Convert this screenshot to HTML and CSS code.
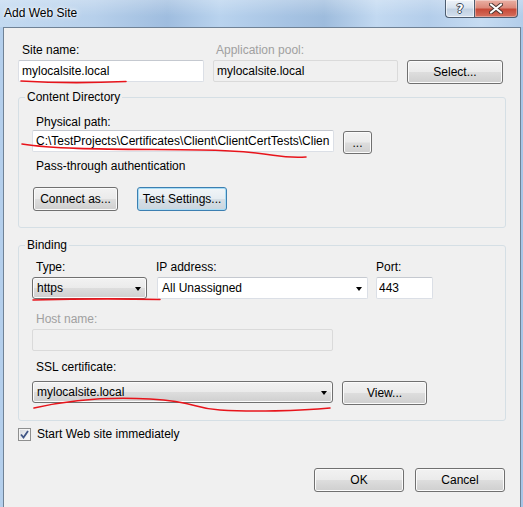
FILE: index.html
```html
<!DOCTYPE html>
<html lang="en">
<head>
    <meta charset="UTF-8">
    <title>Add Web Site</title>
    <link rel="stylesheet" href="styles.css">
</head>
<body>
    <div class="window">
        <!-- Title bar -->
        <div class="titlebar">
            <span class="title">Add Web Site</span>
            <div class="caption-btns">
                <span class="cap-help">?</span>
                <span class="cap-close">
                    <svg width="14" height="11" viewBox="0 0 14 11">
                        <path d="M2 1.5 L12 9.5 M12 1.5 L2 9.5" stroke="#4a3530" stroke-width="4" stroke-linecap="round"/>
                        <path d="M2 1.5 L12 9.5 M12 1.5 L2 9.5" stroke="#fff" stroke-width="2.2" stroke-linecap="round"/>
                    </svg>
                </span>
            </div>
        </div>

        <!-- Dialog body -->
        <div class="client">
            <div class="top-row">
                <div class="field site-field">
                    <label class="lbl">Site name:</label>
                    <input class="textbox" type="text" value="mylocalsite.local">
                </div>
                <div class="field pool-field">
                    <label class="lbl disabled">Application pool:</label>
                    <input class="textbox readonly" type="text" value="mylocalsite.local" readonly>
                </div>
                <button class="btn select-btn">Select...</button>
            </div>

            <fieldset class="group content-group">
                <legend>Content Directory</legend>
                <label class="lbl path-lbl">Physical path:</label>
                <div class="path-row">
                    <input class="textbox path-box" type="text" value="C:\TestProjects\Certificates\Client\ClientCertTests\Clien">
                    <button class="btn browse-btn">...</button>
                </div>
                <div class="auth-text">Pass-through authentication</div>
                <div class="auth-btns">
                    <button class="btn connect-btn">Connect as...</button>
                    <button class="btn focused test-btn">Test Settings...</button>
                </div>
            </fieldset>

            <fieldset class="group binding-group">
                <legend>Binding</legend>
                <div class="binding-row">
                    <div class="field type-field">
                        <label class="lbl">Type:</label>
                        <div class="combo combo-btn">https<span class="arrow"></span></div>
                    </div>
                    <div class="field ip-field">
                        <label class="lbl">IP address:</label>
                        <div class="combo combo-edit">All Unassigned<span class="arrow"></span></div>
                    </div>
                    <div class="field port-field">
                        <label class="lbl">Port:</label>
                        <input class="textbox port-box" type="text" value="443">
                    </div>
                </div>
                <div class="field host-field">
                    <label class="lbl disabled">Host name:</label>
                    <input class="textbox readonly host-box" type="text" value="" disabled>
                </div>
                <div class="field ssl-field">
                    <label class="lbl">SSL certificate:</label>
                    <div class="ssl-row">
                        <div class="combo combo-btn ssl-combo">mylocalsite.local<span class="arrow"></span></div>
                        <button class="btn view-btn">View...</button>
                    </div>
                </div>
            </fieldset>

            <div class="check-row">
                <span class="checkbox">
                    <svg width="9" height="9" viewBox="0 0 9 9">
                        <path d="M1 4.5 L3.5 7.5 L8 1" fill="none" stroke="#3f5585" stroke-width="1.8"/>
                    </svg>
                </span>
                <span>Start Web site immediately</span>
            </div>

            <div class="footer">
                <button class="btn ok-btn">OK</button>
                <button class="btn cancel-btn">Cancel</button>
            </div>
        </div>

        <!-- red pen marks drawn over the form -->
        <svg class="ink" width="523" height="507" viewBox="0 0 523 507">
            <g fill="none" stroke="#e8141b" stroke-width="1.6" stroke-linecap="round">
                <path d="M21 81 Q 70 84 126 81.5"/>
                <path d="M22 144 C 60 150, 120 149, 200 150 S 270 159, 306 157"/>
                <path d="M33 300 Q 100 298 160 299.5"/>
                <path d="M34 408 C 60 402, 100 396, 150 399 S 190 408, 220 410 S 300 411, 330 408"/>
            </g>
        </svg>
    </div>
</body>
</html>
```

FILE: styles.css
```css
* {
    margin: 0;
    padding: 0;
    box-sizing: border-box;
}

body {
    font-family: "Liberation Sans", Arial, sans-serif;
    font-size: 12px;
    line-height: 14px;
    color: #000;
    background: #fff;
}

/* Window frame */
.window {
    position: relative;
    width: 523px;
    height: 507px;
    overflow: hidden;
    display: flex;
    flex-direction: column;
    background: linear-gradient(90deg, #b4cfec 0%, #a8c5e6 100%);
}

/* Glass title bar */
.titlebar {
    height: 27px;
    display: flex;
    align-items: flex-start;
    background:
        linear-gradient(180deg, rgba(255, 255, 255, 0.25) 0%, rgba(255, 255, 255, 0) 60%),
        linear-gradient(90deg, #c3daf1 0%, #b7d0eb 18%, #9fbddf 32%, #b9d3ee 42%, #a6c3e3 55%, #9ebcdd 62%, #c2d9f1 72%, #b3cdea 82%, #c6dcf2 92%, #b2cdea 100%);
}

.title {
    padding: 6px 0 0 4px;
    text-shadow: 0 0 6px #fff, 0 0 3px #fff;
}

.caption-btns {
    margin-left: auto;
    margin-right: 5px;
    display: flex;
}

.cap-help,
.cap-close {
    height: 18px;
    display: flex;
    align-items: center;
    justify-content: center;
    border: 1px solid #4d5d70;
    border-top: none;
}

.cap-help {
    width: 29px;
    border-right: none;
    border-bottom-left-radius: 4px;
    background: linear-gradient(180deg, #eef3f9 0%, #d9e3ee 45%, #c2d1e2 55%, #d3e0ee 100%);
    box-shadow: inset 0 0 0 1px rgba(255, 255, 255, 0.6);
    color: #fff;
    font-family: "DejaVu Sans", sans-serif;
    font-weight: bold;
    font-size: 12px;
    text-shadow: 1px 0 0 #3b4656, -1px 0 0 #3b4656, 0 1px 0 #3b4656, 0 -1px 0 #3b4656;
}

.cap-close {
    width: 44px;
    border-bottom-right-radius: 4px;
    background: linear-gradient(180deg, #eab0a4 0%, #dc8a7b 45%, #c74a38 55%, #d5705e 100%);
    box-shadow: inset 0 0 0 1px rgba(255, 255, 255, 0.35);
}

/* Client area of the dialog */
.client {
    flex: 1;
    margin: 0 2px 0 3px;
    border: 1px solid #6f8296;
    border-bottom: none;
    background: #f0f0f0;
    padding: 15px 14px 0 14px;
}

.lbl {
    display: block;
    height: 14px;
    margin-bottom: 3px;
    white-space: nowrap;
}

.lbl.disabled {
    color: #a0a0a0;
}

/* Text boxes */
.textbox {
    display: block;
    height: 22px;
    font: inherit;
    color: #000;
    padding: 0 2px 0 3px;
    background: #fff;
    border: 1px solid #dbdfe6;
    border-top-color: #c5c9d0;
    border-radius: 2px;
    outline: none;
}

.textbox.readonly {
    background: #f0f0f0;
    border-color: #dadada;
}

/* Push buttons */
.btn {
    display: block;
    height: 24px;
    font: inherit;
    color: #000;
    border: 1px solid #707070;
    border-radius: 3px;
    background: linear-gradient(180deg, #f2f2f2 0%, #ebebeb 48%, #dddddd 52%, #cfcfcf 100%);
    box-shadow: inset 0 0 0 1px #fbfbfb;
}

.btn.focused {
    border-color: #3c7fb1;
    background: linear-gradient(180deg, #f1f5f8 0%, #e6edf2 48%, #d6dfe6 52%, #cad5de 100%);
    box-shadow: inset 0 0 0 1px #a7dcf5;
}

/* Top row: site name, pool, select */
.top-row {
    display: flex;
    gap: 9px;
}

.site-field .lbl {
    padding-left: 4px;
}

.site-field .textbox {
    width: 186px;
}

.pool-field .lbl {
    padding-left: 3px;
}

.pool-field .textbox {
    width: 185px;
}

.select-btn {
    width: 96px;
    margin-top: 17px;
}

/* Group boxes */
.group {
    border: 1px solid #d5dfe5;
    border-radius: 3px;
    min-width: 0;
}

.group legend {
    margin-left: -7px;
    padding: 0 2px;
    line-height: 14px;
}

.content-group {
    margin-top: 6px;
    padding: 11px 0 16px 13px;
}

.path-lbl {
    padding-left: 4px;
    margin-bottom: 1px;
}

.path-row {
    display: flex;
    gap: 9px;
}

.path-box {
    width: 302px;
    padding-right: 0;
}

.browse-btn {
    width: 29px;
    height: 23px;
    margin-top: 1px;
}

.auth-text {
    margin-top: 5px;
    padding-left: 4px;
}

.auth-btns {
    display: flex;
    gap: 19px;
    margin-top: 14px;
    padding-left: 1px;
}

.connect-btn {
    width: 85px;
}

.test-btn {
    width: 90px;
}

.binding-group {
    margin-top: 10px;
    padding: 8px 0 15px 13px;
}

.binding-row {
    display: flex;
}

.type-field {
    width: 115px;
}

.type-field .lbl {
    padding-left: 4px;
}

.ip-field {
    width: 211px;
    margin-left: 10px;
}

.ip-field .lbl {
    margin-left: -1px;
}

.port-field {
    width: 57px;
    margin-left: 8px;
}

.port-box {
    width: 57px;
    padding-left: 2px;
}

/* Drop-down lists */
.combo {
    position: relative;
    height: 22px;
    display: flex;
    align-items: center;
    padding-left: 4px;
    white-space: nowrap;
}

.combo-btn {
    border: 1px solid #707070;
    border-radius: 3px;
    background: linear-gradient(180deg, #f2f2f2 0%, #ebebeb 48%, #dddddd 52%, #cfcfcf 100%);
    box-shadow: inset 0 0 0 1px #fbfbfb;
}

.combo-edit {
    border: 1px solid #dbdfe6;
    border-top-color: #c5c9d0;
    border-radius: 2px;
    background: #fff;
}

.combo .arrow {
    position: absolute;
    right: 5px;
    top: 9px;
    width: 0;
    height: 0;
    border-left: 3.5px solid transparent;
    border-right: 3.5px solid transparent;
    border-top: 4px solid #000;
}

.host-field {
    margin-top: 13px;
}

.host-field .lbl,
.ssl-field .lbl {
    padding-left: 4px;
}

.host-box {
    width: 301px;
}

.ssl-field {
    margin-top: 9px;
}

.ssl-field .lbl {
    margin-bottom: 7px;
}

.ssl-row {
    display: flex;
    align-items: flex-start;
    gap: 9px;
}

.ssl-combo {
    width: 301px;
}

.view-btn {
    width: 85px;
}

/* Start checkbox */
.check-row {
    display: flex;
    align-items: center;
    gap: 6px;
    margin-top: 6px;
}

.checkbox {
    width: 13px;
    height: 13px;
    display: flex;
    align-items: center;
    justify-content: center;
    border: 1px solid #8e8f8f;
    background: linear-gradient(135deg, #d2d6dc 0%, #eef0f2 60%, #fbfbfb 100%);
    box-shadow: inset 0 0 0 1px #f4f4f4;
}

/* OK / Cancel */
.footer {
    display: flex;
    justify-content: flex-end;
    gap: 11px;
    margin-top: 27px;
    padding-right: 1px;
}

.ok-btn,
.cancel-btn {
    width: 90px;
}

.ink {
    position: absolute;
    left: 0;
    top: 0;
    pointer-events: none;
}
```
